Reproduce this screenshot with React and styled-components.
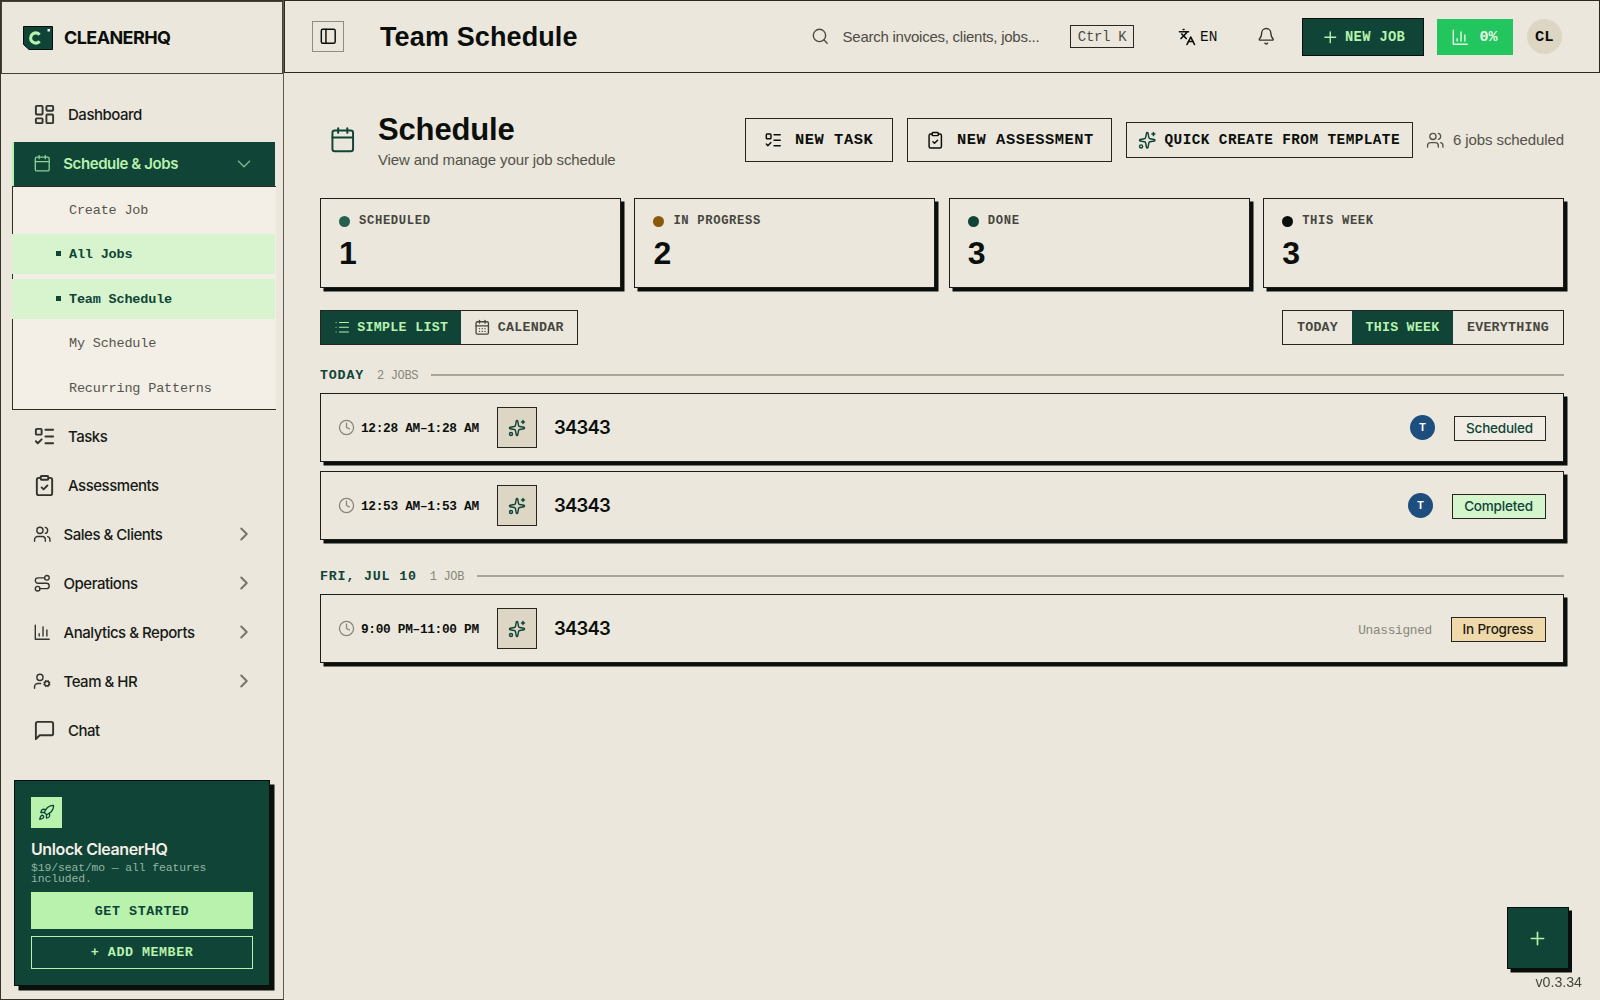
import React from 'react';
import styled, { createGlobalStyle, css } from 'styled-components';
import {
  LayoutDashboard, Calendar, CalendarDays, ChevronDown, ChevronRight, ListTodo,
  ClipboardCheck, Users, Route, UserCog, Rocket, PanelLeft, Search, Languages,
  Bell, Plus, Sparkles, List, Clock,
} from 'lucide-react';

const ink = '#0b0f0c';
const paper = '#ebe7dc';
const green = '#0f4437';
const mint = '#b8f2ad';
const sans = "Inter, 'Liberation Sans', sans-serif";
const grotesk = "'Liberation Sans', sans-serif";
const mono = "'Liberation Mono', monospace";

const GlobalStyle = createGlobalStyle`
  * { box-sizing: border-box; }
  body { margin: 0; background: ${paper}; color: ${ink}; font-family: ${sans}; }
  button { font: inherit; color: inherit; background: none; border: 0; padding: 0; cursor: pointer; }
  svg { display: block; flex: none; }
`;

const monoText = css`
  font-family: ${mono};
  font-size: ${(p) => p.$size}px;
  letter-spacing: ${(p) => p.$track || 0}px;
  white-space: nowrap;
`;

const Page = styled.div`
  display: flex;
  width: 1600px;
  height: 1000px;
  overflow: hidden;
`;

/* Sidebar */

const Sidebar = styled.aside`
  width: 284px;
  flex: none;
  display: flex;
  flex-direction: column;
  border: 1px solid #36332b;
  border-right: 1px solid #5f5b50;
`;

const Brand = styled.div`
  height: 73px;
  flex: none;
  display: flex;
  align-items: center;
  gap: 11.5px;
  padding-left: 20.5px;
  border: 1px solid #45423a;
`;

const BrandName = styled.span`
  font-size: 18px;
  font-weight: 700;
  letter-spacing: -0.6px;
`;

const Nav = styled.nav`
  display: flex;
  flex-direction: column;
  padding: 19px 7px 0 11px;
`;

const NavItem = styled.a`
  height: 44.4px;
  margin-bottom: 4.55px;
  display: flex;
  align-items: center;
  gap: 12px;
  padding: 0 21px 1px ${(p) => (p.$active ? 18.7 : 21)}px;
  font-size: 15px;
  font-weight: 500;
  letter-spacing: -0.48px;
  color: #171a16;

  svg { color: #33342e; }
  span + svg { margin-left: auto; color: #77756a; }

  ${(p) => p.$active && css`
    margin-bottom: 0;
    margin-right: 1px;
    padding-right: 20px;
    border-left: 2px solid ${mint};
    background: ${green};
    color: ${mint};
    font-weight: 600;
    letter-spacing: -0.4px;
    svg { color: #8fd09a; }
    span + svg { color: #78ad88; }
  `}
`;

const SubNav = styled.div`
  height: 224px;
  margin-bottom: 4.6px;
  padding-top: 2.5px;
  border: 1px solid #2e2c25;
  border-right: 0;
  background: #f3eee6;
`;

const SubItem = styled.a`
  height: 40px;
  margin: 0 1px 4.5px -1px;
  display: flex;
  align-items: center;
  padding: 1px 0 0 44px;
  ${monoText}
  color: #56554d;

  &::before {
    content: '';
    width: 5px;
    height: 5px;
    margin: 0 8px 2px 0;
  }

  ${(p) => p.$active && css`
    background: #d8f4ce;
    color: ${green};
    font-weight: 700;
    &::before { background: ${green}; }
  `}
`;

const Promo = styled.section`
  height: 206px;
  margin: auto 13px 13.5px 13px;
  padding: 16px 16px 0;
  background: ${green};
  border: 1px solid ${ink};
  box-shadow: 4.5px 4.5px 0 ${ink};
`;

const PromoIcon = styled.div`
  width: 31px;
  height: 31.5px;
  display: grid;
  place-items: center;
  background: ${mint};
  color: ${green};
`;

const PromoTitle = styled.h3`
  margin: 11px 0 0;
  font-size: 16px;
  line-height: 20px;
  font-weight: 600;
  letter-spacing: -0.4px;
  color: #f3eee6;
`;

const PromoText = styled.p`
  margin: 4px 0 6.5px;
  ${monoText}
  white-space: normal;
  line-height: 11.3px;
  color: #94b5a4;
`;

const PromoButton = styled.button`
  display: flex;
  align-items: center;
  justify-content: center;
  width: 222px;
  height: ${(p) => (p.$outline ? 33.5 : 37)}px;
  margin-bottom: 6.5px;
  padding-top: 1px;
  ${monoText}
  font-weight: 700;
  background: ${(p) => (p.$outline ? 'transparent' : mint)};
  border: 1px solid ${mint};
  color: ${(p) => (p.$outline ? mint : green)};
`;

/* Top bar */

const Content = styled.div`
  flex: 1;
  min-width: 0;
  display: flex;
  flex-direction: column;
`;

const TopBar = styled.header`
  height: 73px;
  flex: none;
  display: flex;
  align-items: center;
  padding: 0 37px 0 27px;
  border: 1px solid #2a2821;
`;

const PanelToggle = styled.button`
  width: 31.5px;
  height: 31.5px;
  display: grid;
  place-items: center;
  border: 1px solid #8f8c80;
  margin-right: 36.5px;
`;

const PageTitle = styled.h1`
  margin: 0 auto 0 0;
  padding-top: 1px;
  font-family: ${grotesk};
  font-size: 27px;
  font-weight: 700;
  letter-spacing: 0.12px;
`;

const SearchBox = styled.div`
  display: flex;
  align-items: center;
  color: #4d4c44;
  font-family: ${grotesk};
  font-size: 15px;
  letter-spacing: -0.25px;
  span { width: 227.5px; margin-left: 13.5px; white-space: nowrap; }
`;

const Kbd = styled.kbd`
  width: 64px;
  height: 23px;
  display: grid;
  place-items: center;
  border: 1px solid #2a2821;
  ${monoText}
  color: #4d4c44;
`;

const Language = styled.button`
  display: flex;
  align-items: center;
  gap: 4px;
  margin: 0 39.5px 0 44px;
  ${monoText}
`;

const NewJob = styled.button`
  width: 122px;
  height: 38px;
  display: flex;
  align-items: center;
  gap: 6px;
  margin: 0 13.5px 0 26px;
  padding: 1px 0 0 18px;
  border: 1px solid ${ink};
  background: ${green};
  color: ${mint};
  ${monoText}
  font-weight: 700;
`;

const Usage = styled.button`
  width: 75.5px;
  height: 36px;
  display: flex;
  align-items: center;
  gap: 10px;
  padding: 1px 0 0 14px;
  background: #22c55e;
  color: #e9fbe9;
  ${monoText}
  font-weight: 700;
`;

const UserBadge = styled.div`
  width: 35.5px;
  height: 35.5px;
  margin-left: 14px;
  display: grid;
  place-items: center;
  border-radius: 50%;
  background: #ddd6c5;
  ${monoText}
  font-weight: 700;
`;

/* Schedule page */

const Main = styled.main`
  padding: 37px 36px 0 36px;
`;

const Heading = styled.div`
  height: 60px;
  display: flex;
  align-items: center;
  margin-bottom: 28px;
  > svg { margin: 0 22px 0 8.5px; color: ${green}; }
`;

const HeadingText = styled.div`
  margin-right: auto;
  font-family: ${grotesk};
  h2 { margin: 1px 0 0; font-size: 31px; line-height: 36px; letter-spacing: -0.15px; font-weight: 700; }
  p { margin: 2px 0 0; font-size: 15px; line-height: 20px; letter-spacing: -0.12px; color: #53524a; }
`;

const OutlineButton = styled.button`
  width: ${(p) => p.$width}px;
  height: ${(p) => (p.$small ? 35.5 : 44.5)}px;
  display: flex;
  align-items: center;
  gap: ${(p) => (p.$small ? 8.5 : 13)}px;
  padding-left: ${(p) => (p.$small ? 11 : 18)}px;
  margin-right: 13.5px;
  border: 1px solid #26251f;
  ${monoText}
  font-weight: 700;
  ${(p) => p.$small && css`svg { color: ${green}; }`}
`;

const JobTotal = styled.div`
  display: flex;
  align-items: center;
  gap: 8.5px;
  font-family: ${grotesk};
  font-size: 15px;
  letter-spacing: -0.1px;
  color: #53524a;
  white-space: nowrap;
  span { margin-bottom: 2px; }
`;

const Stats = styled.div`
  display: grid;
  grid-template-columns: repeat(4, 1fr);
  gap: 13.5px;
  margin-bottom: 22px;
`;

const StatCard = styled.div`
  height: 90px;
  padding: 15px 18px 0;
  border: 1px solid #1d1e19;
  box-shadow: 3.5px 3.5px 0 ${ink};
`;

const StatLabel = styled.div`
  display: flex;
  align-items: center;
  gap: 9px;
  height: 14px;
  ${monoText}
  font-weight: 700;
  color: #46463e;

  &::before {
    content: '';
    width: 11px;
    height: 11px;
    border-radius: 50%;
    background: ${(p) => p.$dot};
  }
`;

const StatValue = styled.div`
  margin-top: 7px;
  font-family: ${grotesk};
  font-size: 32px;
  line-height: 36px;
  font-weight: 700;
`;

const Controls = styled.div`
  display: flex;
  justify-content: space-between;
  margin-bottom: 21px;
`;

const Segments = styled.div`
  display: flex;
  height: 34.5px;
  border: 1px solid #26251f;
`;

const Segment = styled.button`
  width: ${(p) => p.$width}px;
  display: flex;
  align-items: center;
  justify-content: center;
  gap: 7px;
  ${monoText}
  font-weight: 700;
  color: #46463e;
  ${(p) => p.$active && css`background: ${green}; color: ${mint};`}
`;

const DayHeader = styled.div`
  display: flex;
  align-items: center;
  height: 19px;
  margin-bottom: 8.5px;

  &::after {
    content: '';
    flex: 1;
    height: 1.5px;
    margin-left: 13px;
    background: #a9a597;
  }
`;

const DayName = styled.span`
  ${monoText}
  font-weight: 700;
  color: ${green};
  margin-right: 13px;
  padding-top: 1px;
`;

const DayCount = styled.span`
  ${monoText}
  color: #88867b;
  padding-top: 1px;
`;

const JobList = styled.div`
  display: flex;
  flex-direction: column;
  gap: 9px;
  margin-bottom: 26.5px;
`;

const JobRow = styled.article`
  height: 69px;
  display: flex;
  align-items: center;
  padding: 0 17.5px;
  border: 1px solid #1d1e19;
  box-shadow: 3.5px 3.5px 0 ${ink};
  > svg { color: #88867b; margin: 0 6px 0 -0.5px; }
`;

const JobTime = styled.span`
  width: 135.5px;
  padding-top: 1px;
  ${monoText}
  font-weight: 700;
`;

const JobTile = styled.span`
  width: 40.5px;
  height: 40.5px;
  display: grid;
  place-items: center;
  border: 1px solid #26251f;
  background: #ddd6c5;
  color: ${green};
`;

const JobTitle = styled.span`
  margin: 0 auto 2px 17px;
  font-size: 18.5px;
  font-weight: 600;
  letter-spacing: -0.8px;
`;

const Assignee = styled.span`
  width: 25px;
  height: 25px;
  display: grid;
  place-items: center;
  border-radius: 50%;
  background: #1d4e7e;
  color: #fff;
  font-size: 10.5px;
  font-weight: 700;
`;

const Unassigned = styled.span`
  ${monoText}
  color: #88867b;
  margin-top: 3px;
`;

const Status = styled.span`
  width: ${(p) => p.$width}px;
  height: 25px;
  margin: 2px 0 0 18.5px;
  padding-bottom: 1px;
  display: grid;
  place-items: center;
  border: 1px solid #26251f;
  background: ${(p) => p.$bg};
  color: ${(p) => p.$color};
  font-size: 13.5px;
  line-height: 22px;
  font-weight: 500;
  letter-spacing: -0.2px;
  white-space: nowrap;
`;

const Floating = styled.button`
  position: fixed;
  right: 31.5px;
  bottom: 31px;
  width: 62px;
  height: 62px;
  display: grid;
  place-items: center;
  background: ${green};
  border: 1px solid ${ink};
  box-shadow: 3.5px 3.5px 0 ${ink};
  color: ${mint};
`;

const Version = styled.span`
  position: fixed;
  right: 18px;
  bottom: 8px;
  font-family: ${grotesk};
  font-size: 14.2px;
  line-height: 20px;
  color: #46463e;
`;

const Logo = () => (
  <svg width="30" height="24" viewBox="0 0 30 24">
    <path d="M.5 .5H29.500V23.500H6L.5 18.500Z" fill={green} stroke={ink} />
    <path d="M16.600 8.700A5.100 5.100 0 1 0 16.600 15.300" fill="none" stroke={mint} strokeWidth="3.100" />
    <rect x="24.500" y="3" width="2.500" height="2.500" fill="#f3eee6" />
  </svg>
);

const ChartIcon = ({ size, strokeWidth }) => (
  <svg width={size} height={size} viewBox="0 0 24 24" fill="none" stroke="currentColor"
    strokeWidth={strokeWidth} strokeLinecap="round" strokeLinejoin="round">
    <path d="M3 3v18h18" />
    <path d="M18 17V9" />
    <path d="M13 17V5" />
    <path d="M8 17v-3" />
  </svg>
);

const ChatIcon = ({ size, strokeWidth }) => (
  <svg width={size} height={size} viewBox="0 0 24 24" fill="none" stroke="currentColor"
    strokeWidth={strokeWidth} strokeLinecap="round" strokeLinejoin="round">
    <path d="M21 15a2 2 0 0 1-2 2H7l-4 4V5a2 2 0 0 1 2-2h14a2 2 0 0 1 2 2z" />
  </svg>
);

const NavLink = ({ icon: Icon, label, group }) => (
  <NavItem>
    <Icon size={group ? 18.5 : 23} strokeWidth={group ? 1.8 : 2} />
    <span>{label}</span>
    {group && <ChevronRight size={22} strokeWidth={2.2} />}
  </NavItem>
);

const subItems = ['Create Job', 'All Jobs', 'Team Schedule', 'My Schedule', 'Recurring Patterns'];

const stats = [
  { label: 'SCHEDULED', value: 1, dot: '#245f51' },
  { label: 'IN PROGRESS', value: 2, dot: '#8a5a0c' },
  { label: 'DONE', value: 3, dot: green },
  { label: 'THIS WEEK', value: 3, dot: ink },
];

const statuses = {
  Scheduled: { $width: 92, $bg: '#f1ede4', $color: green },
  Completed: { $width: 94, $bg: '#d5f5cd', $color: green },
  'In Progress': { $width: 95, $bg: '#efd9ab', $color: '#1d1a10' },
};

const days = [
  {
    name: 'TODAY',
    count: '2 JOBS',
    jobs: [
      { time: '12:28 AM–1:28 AM', title: '34343', assignee: 'T', status: 'Scheduled' },
      { time: '12:53 AM–1:53 AM', title: '34343', assignee: 'T', status: 'Completed' },
    ],
  },
  {
    name: 'FRI, JUL 10',
    count: '1 JOB',
    jobs: [{ time: '9:00 PM–11:00 PM', title: '34343', status: 'In Progress' }],
  },
];

const Job = ({ job }) => (
  <JobRow>
    <Clock size={17} strokeWidth={1.8} />
    <JobTime $size={12.8} $track={-0.32}>{job.time}</JobTime>
    <JobTile><Sparkles size={18} strokeWidth={1.9} /></JobTile>
    <JobTitle>{job.title}</JobTitle>
    {job.assignee
      ? <Assignee>{job.assignee}</Assignee>
      : <Unassigned $size={12.8} $track={-0.3}>Unassigned</Unassigned>}
    <Status {...statuses[job.status]}>{job.status}</Status>
  </JobRow>
);

const App = () => {
  return (
    <Page>
      <GlobalStyle />
      <Sidebar>
        <Brand>
          <Logo />
          <BrandName>CLEANERHQ</BrandName>
        </Brand>
        <Nav>
          <NavLink icon={LayoutDashboard} label="Dashboard" />
          <NavItem $active>
            <Calendar size={18.5} strokeWidth={1.7} />
            <span>Schedule &amp; Jobs</span>
            <ChevronDown size={22} strokeWidth={1.8} />
          </NavItem>
          <SubNav>
            {subItems.map((item) => (
              <SubItem key={item} $size={13.5} $track={-0.18} $active={item === 'All Jobs' || item === 'Team Schedule'}>
                {item}
              </SubItem>
            ))}
          </SubNav>
          <NavLink icon={ListTodo} label="Tasks" />
          <NavLink icon={ClipboardCheck} label="Assessments" />
          <NavLink group icon={Users} label="Sales & Clients" />
          <NavLink group icon={Route} label="Operations" />
          <NavLink group icon={ChartIcon} label="Analytics & Reports" />
          <NavLink group icon={UserCog} label="Team & HR" />
          <NavLink icon={ChatIcon} label="Chat" />
        </Nav>
        <Promo>
          <PromoIcon><Rocket size={17} strokeWidth={1.9} /></PromoIcon>
          <PromoTitle>Unlock CleanerHQ</PromoTitle>
          <PromoText $size={11.4} $track={-0.1}>$19/seat/mo — all features included.</PromoText>
          <PromoButton $size={13.4} $track={0.55}>GET STARTED</PromoButton>
          <PromoButton $outline $size={13.4} $track={0.5}>+ ADD MEMBER</PromoButton>
        </Promo>
      </Sidebar>
      <Content>
        <TopBar>
          <PanelToggle><PanelLeft size={18.5} strokeWidth={1.9} /></PanelToggle>
          <PageTitle>Team Schedule</PageTitle>
          <SearchBox>
            <Search size={18.5} strokeWidth={1.8} />
            <span>Search invoices, clients, jobs...</span>
          </SearchBox>
          <Kbd $size={14} $track={-0.3}>Ctrl K</Kbd>
          <Language $size={14.5}><Languages size={18} strokeWidth={2.2} />EN</Language>
          <Bell size={18.5} strokeWidth={1.8} color="#33342e" />
          <NewJob $size={13.8} $track={0.32}><Plus size={18.5} strokeWidth={1.8} />NEW JOB</NewJob>
          <Usage $size={15}><ChartIcon size={18.5} strokeWidth={1.8} />0%</Usage>
          <UserBadge $size={15.5}>CL</UserBadge>
        </TopBar>
        <Main>
          <Heading>
            <Calendar size={27.5} strokeWidth={1.7} />
            <HeadingText>
              <h2>Schedule</h2>
              <p>View and manage your job schedule</p>
            </HeadingText>
            <OutlineButton $width={148.5} $size={15.4} $track={0.54}><ListTodo size={18.5} strokeWidth={1.9} />NEW TASK</OutlineButton>
            <OutlineButton $width={205.5} $size={15.4} $track={0.54}><ClipboardCheck size={18.5} strokeWidth={1.9} />NEW ASSESSMENT</OutlineButton>
            <OutlineButton $small $width={287} $size={14.4} $track={0.42}><Sparkles size={18.5} strokeWidth={1.9} />QUICK CREATE FROM TEMPLATE</OutlineButton>
            <JobTotal><Users size={18.5} strokeWidth={1.7} /><span>6 jobs scheduled</span></JobTotal>
          </Heading>
          <Stats>
            {stats.map((stat) => (
              <StatCard key={stat.label}>
                <StatLabel $size={12.2} $track={0.65} $dot={stat.dot}>{stat.label}</StatLabel>
                <StatValue>{stat.value}</StatValue>
              </StatCard>
            ))}
          </Stats>
          <Controls>
            <Segments>
              <Segment $active $width={140} $size={13.3} $track={0.3}><List size={16.5} strokeWidth={1.6} />SIMPLE LIST</Segment>
              <Segment $width={116} $size={13.3} $track={0.3}><CalendarDays size={16.5} strokeWidth={1.9} />CALENDAR</Segment>
            </Segments>
            <Segments>
              <Segment $width={69} $size={13.3} $track={0.22}>TODAY</Segment>
              <Segment $active $width={101} $size={13.3} $track={0.22}>THIS WEEK</Segment>
              <Segment $width={110} $size={13.3} $track={0.22}>EVERYTHING</Segment>
            </Segments>
          </Controls>
          {days.map((day) => (
            <React.Fragment key={day.name}>
              <DayHeader>
                <DayName $size={13.3} $track={0.82}>{day.name}</DayName>
                <DayCount $size={12} $track={-0.35}>{day.count}</DayCount>
              </DayHeader>
              <JobList>
                {day.jobs.map((job) => <Job key={job.time} job={job} />)}
              </JobList>
            </React.Fragment>
          ))}
        </Main>
      </Content>
      <Floating><Plus size={21} strokeWidth={1.9} /></Floating>
      <Version>v0.3.34</Version>
    </Page>
  );
};

export default App;
